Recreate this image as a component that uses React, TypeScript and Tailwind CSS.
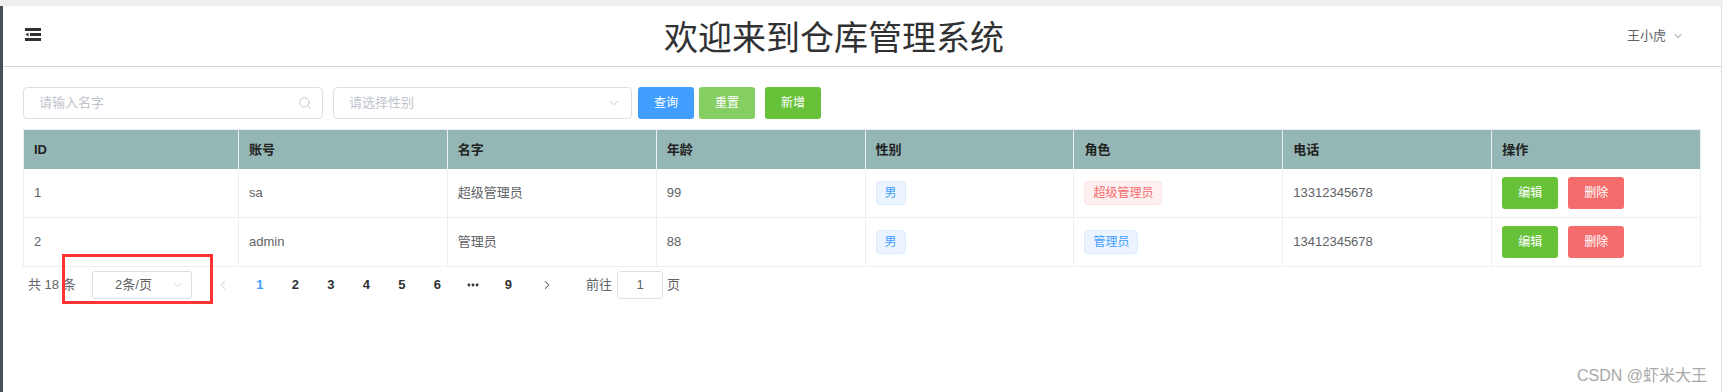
import { Search, ChevronDown, ChevronLeft, ChevronRight, MoreHorizontal } from "lucide-react";

const rows = [
  { id: 1, no: "sa", name: "超级管理员", age: 99, sex: "男", role: "超级管理员", admin: true, phone: "13312345678" },
  { id: 2, no: "admin", name: "管理员", age: 88, sex: "男", role: "管理员", admin: false, phone: "13412345678" },
];

const cols = ["ID", "账号", "名字", "年龄", "性别", "角色", "电话", "操作"];

function FoldIcon() {
  return (
    <svg width="16" height="13" viewBox="0 0 16 13" className="-mt-[3px] shrink-0" fill="#303133">
      <rect x="0" y="0" width="16" height="3" />
      <polygon points="0.5,6.5 3.5,4.5 3.5,8.5" />
      <rect x="5" y="5" width="11" height="3" />
      <rect x="0" y="10" width="16" height="3" />
    </svg>
  );
}

function Tag({ text, red }: { text: string; red?: boolean }) {
  return (
    <span
      className={`inline-flex h-[24px] items-center rounded-[4px] border px-[8px] text-[12px] ${
        red ? "border-[#fde2e2] bg-[#fef0f0] text-[#f56c6c]" : "border-[#d9ecff] bg-[#ecf5ff] text-[#409eff]"
      }`}
    >
      {text}
    </span>
  );
}

export default function App() {
  return (
    <div className="relative h-[392px] w-[1723px] overflow-hidden bg-white font-['Liberation_Sans','Noto_Sans_CJK_SC',sans-serif]">
      <div className="h-[6px] bg-[#efefef]" />
      <div className="flex h-[386px]">
        <div className="w-[3px] bg-[#4a4f57]" />
        <div className="flex-1 border-r border-[#dcdcdc]">
          {/* Header */}
          <header className="flex h-[61px] items-center border-b border-[#d4d4d4] pl-[22px] pr-[36px]">
            <FoldIcon />
            <h1 className="flex-1 text-center text-[34px] leading-[40px] text-[#303133] font-['Noto_Sans_CJK_SC',sans-serif]">
              欢迎来到仓库管理系统
            </h1>
            <div className="flex w-[58px] items-center gap-[6px] text-[13px] text-[#606266]">
              王小虎
              <ChevronDown size={12} strokeWidth={1.5} />
            </div>
          </header>

          <main className="px-[20px] pt-[20px]">
            {/* Search bar */}
            <div className="flex h-[32px] items-center">
              <div className="flex h-[32px] w-[300px] items-center justify-between rounded-[4px] border border-[#dcdfe6] pl-[15px] pr-[10px] text-[13px] text-[#c0c4cc]">
                请输入名字
                <Search size={14} strokeWidth={1.6} />
              </div>
              <div className="ml-[10px] flex h-[32px] w-[299px] items-center justify-between rounded-[4px] border border-[#dcdfe6] pl-[15px] pr-[10px] text-[13px] text-[#c0c4cc]">
                请选择性别
                <ChevronDown size={14} strokeWidth={1.5} />
              </div>
              <button className="ml-[6px] h-[32px] w-[56px] rounded-[3px] bg-[#409eff] text-[12px] text-white">查询</button>
              <button className="ml-[5px] h-[32px] w-[56px] rounded-[3px] bg-[#85ce61] text-[12px] text-white">重置</button>
              <button className="ml-[10px] h-[32px] w-[56px] rounded-[3px] bg-[#67c23a] text-[12px] text-white">新增</button>
            </div>

            {/* Table */}
            <div className="mt-[10px] border-l border-t border-[#ebeef5] text-[13px]">
              <div className="grid h-[39px] grid-cols-[215px_repeat(7,1fr)] bg-[#94b6b5]">
                {cols.map((c) => (
                  <div key={c} className="flex items-center border-r border-[#ebeef5] pl-[10px] font-bold text-[#222]">
                    {c}
                  </div>
                ))}
              </div>
              {rows.map((r) => (
                <div key={r.id} className="grid h-[49px] grid-cols-[215px_repeat(7,1fr)] border-b border-[#ebeef5] text-[#606266]">
                  <div className="flex items-center border-r border-[#ebeef5] pl-[10px]">{r.id}</div>
                  <div className="flex items-center border-r border-[#ebeef5] pl-[10px]">{r.no}</div>
                  <div className="flex items-center border-r border-[#ebeef5] pl-[10px]">{r.name}</div>
                  <div className="flex items-center border-r border-[#ebeef5] pl-[10px]">{r.age}</div>
                  <div className="flex items-center border-r border-[#ebeef5] pl-[10px]"><Tag text={r.sex} /></div>
                  <div className="flex items-center border-r border-[#ebeef5] pl-[10px]"><Tag text={r.role} red={r.admin} /></div>
                  <div className="flex items-center border-r border-[#ebeef5] pl-[10px]">{r.phone}</div>
                  <div className="flex items-center gap-[10px] border-r border-[#ebeef5] pl-[10px]">
                    <button className="h-[32px] w-[56px] rounded-[3px] bg-[#67c23a] text-[12px] text-white">编辑</button>
                    <button className="h-[32px] w-[56px] rounded-[3px] bg-[#f56c6c] text-[12px] text-white">删除</button>
                  </div>
                </div>
              ))}
            </div>

            {/* Pagination */}
            <div className="mt-[4px] flex h-[28px] items-center pl-[5px] text-[13px] text-[#606266]">
              <span className="w-[64px]">共 18 条</span>
              <div className="relative flex h-[28px] w-[100px] items-center rounded-[3px] border border-[#dcdfe6]">
                <span className="flex-1 pl-[8px] pr-[25px] text-center">2条/页</span>
                <ChevronDown size={12} strokeWidth={1.5} className="absolute right-[7px] text-[#c0c4cc]" />
              </div>
              <div className="ml-[13px] flex h-[28px] w-[35px] items-center justify-center text-[#c0c4cc]">
                <ChevronLeft size={14} strokeWidth={1.6} />
              </div>
              <div className="ml-[2px] flex font-bold text-[#303133]">
                {["1", "2", "3", "4", "5", "6"].map((p) => (
                  <span key={p} className={`flex h-[28px] w-[35.5px] items-center justify-center ${p === "1" ? "text-[#409eff]" : ""}`}>
                    {p}
                  </span>
                ))}
                <span className="flex h-[28px] w-[35.5px] items-center justify-center">
                  <MoreHorizontal size={14} strokeWidth={3} />
                </span>
                <span className="flex h-[28px] w-[35.5px] items-center justify-center">9</span>
              </div>
              <div className="ml-[3px] flex h-[28px] w-[35px] items-center justify-center text-[#303133]">
                <ChevronRight size={14} strokeWidth={1.6} />
              </div>
              <span className="ml-[22px]">前往</span>
              <div className="ml-[5px] flex h-[28px] w-[46px] items-center justify-center rounded-[3px] border border-[#dcdfe6]">1</div>
              <span className="ml-[4px]">页</span>
            </div>
          </main>
        </div>
        <div className="w-[1px]" />
      </div>

      {/* annotation + watermark */}
      <div className="absolute left-[62px] top-[254px] h-[50px] w-[151px] border-[3px] border-[#f33]" />
      <div className="absolute right-[16px] top-[366px] text-[16px] leading-[20px] text-[#a8a8a8]">CSDN @虾米大王</div>
    </div>
  );
}
